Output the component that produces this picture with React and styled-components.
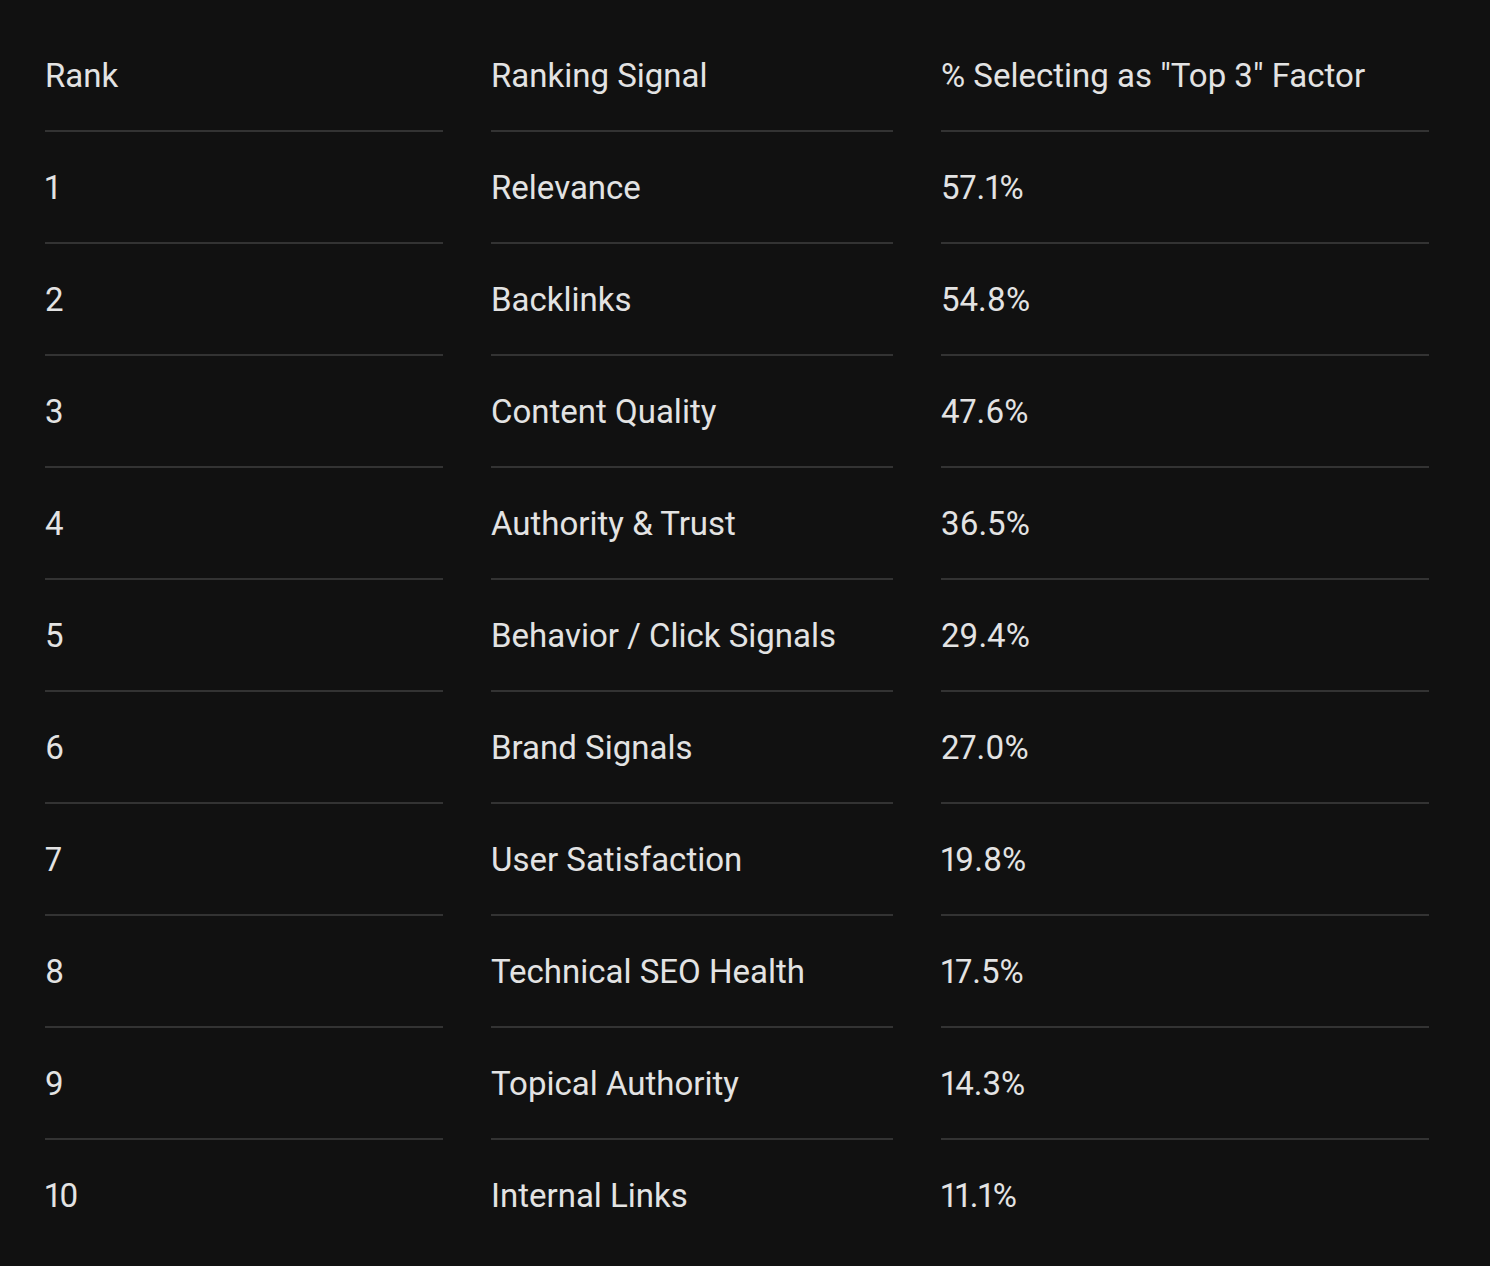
import React from "react";
import styled, { createGlobalStyle } from "styled-components";

const Global = createGlobalStyle`
  html, body { margin: 0; padding: 0; background: #111111; }
  body { font-family: "Roboto", "Open Sans", sans-serif; color: #e3e3e3; }
`;

const Page = styled.div`
  min-height: 1266px;
  background: #111111;
  padding: 20px 61px 16px 45px;
  box-sizing: border-box;
`;

const Table = styled.div`
  display: flex;
  flex-direction: column;
`;

const Row = styled.div`
  display: grid;
  grid-template-columns: 398px 402px 488px;
  column-gap: 48px;
`;

const Cell = styled.div`
  height: 110px;
  display: flex;
  align-items: center;
  font-size: 33px;
  line-height: 1;
  font-weight: 400;
  font-variant-numeric: proportional-nums;
  color: #e3e3e3;
  border-bottom: 2px solid ${(p) => (p.$last ? "transparent" : "#333333")};
  white-space: nowrap;
`;

const rows = [
  ["1", "Relevance", "57.1%"],
  ["2", "Backlinks", "54.8%"],
  ["3", "Content Quality", "47.6%"],
  ["4", "Authority & Trust", "36.5%"],
  ["5", "Behavior / Click Signals", "29.4%"],
  ["6", "Brand Signals", "27.0%"],
  ["7", "User Satisfaction", "19.8%"],
  ["8", "Technical SEO Health", "17.5%"],
  ["9", "Topical Authority", "14.3%"],
  ["10", "Internal Links", "11.1%"],
];

export default function App() {
  return (
    <>
      <Global />
      <Page>
        <Table>
          <Row>
            <Cell>Rank</Cell>
            <Cell>Ranking Signal</Cell>
            <Cell>% Selecting as "Top 3" Factor</Cell>
          </Row>
          {rows.map((r, i) => {
            const last = i === rows.length - 1;
            return (
              <Row key={r[0]}>
                <Cell $last={last}>{r[0]}</Cell>
                <Cell $last={last}>{r[1]}</Cell>
                <Cell $last={last}>{r[2]}</Cell>
              </Row>
            );
          })}
        </Table>
      </Page>
    </>
  );
}
